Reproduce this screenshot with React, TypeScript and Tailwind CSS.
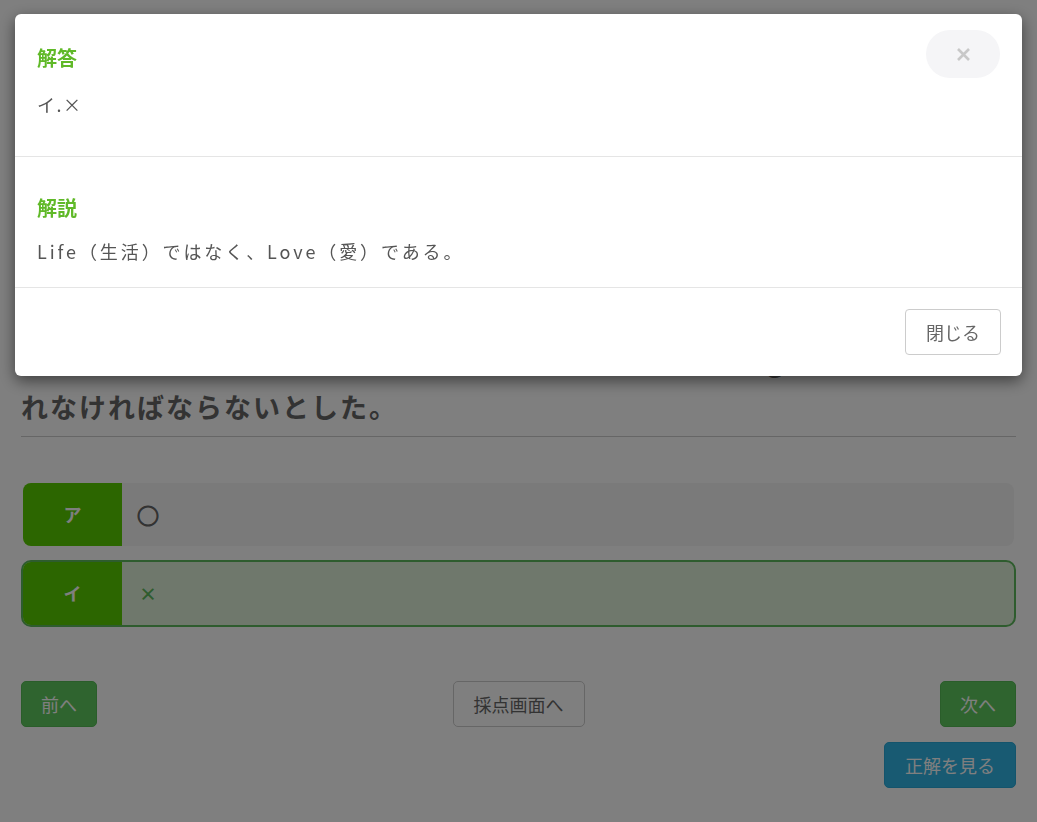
import React from 'react';

const font = '"Noto Sans CJK JP", "Noto Sans", sans-serif';

interface Choice {
  label: string;
  text: string;
  selected?: boolean;
}

const choices: Choice[] = [
  { label: 'ア', text: '○' },
  { label: 'イ', text: '×', selected: true },
];

const ChoiceRow: React.FC<{ choice: Choice }> = ({ choice }) => (
  <div
    className={
      choice.selected
        ? 'flex h-[67px] rounded-[10px] border-2 border-[#5cb85c] bg-[#dff0d8] overflow-hidden'
        : 'flex h-[67px] rounded-[10px] border-2 border-transparent bg-clip-padding bg-[#f5f5f5] overflow-hidden'
    }
  >
    <div className="w-[99px] shrink-0 flex items-center justify-center bg-[#58cc00] text-white text-[18px] font-bold">
      {choice.label}
    </div>
    <div
      className={
        choice.selected
          ? 'flex items-center pl-[17px] text-[18px] font-bold text-[#5cb85c]'
          : 'flex items-center pl-[15px] text-[22px] text-[#666] [-webkit-text-stroke:1.2px_#666]'
      }
    >
      {choice.text}
    </div>
  </div>
);

const Page: React.FC = () => (
  <div className="px-[21px] pt-[338px] pb-[40px]">
    <h2 className="text-[27px] leading-[46px] font-bold tracking-[2px] text-[#666] pb-[6px] border-b border-[#ccc]">
      ベンサムは、最大多数の最大幸福の原理によって、Loving Lifeが判断さ
      <br />
      れなければならないとした。
    </h2>

    <div className="mt-[44px] flex flex-col gap-[12px]">
      {choices.map((c) => (
        <ChoiceRow key={c.label} choice={c} />
      ))}
    </div>

    <div className="mt-[54px] flex items-start justify-between">
      <button className="h-[46px] px-[19px] rounded-[5px] bg-[#5fc95f] border border-[#55bb55] text-white text-[18px]">
        前へ
      </button>
      <button className="h-[46px] px-[20px] rounded-[5px] bg-white border border-[#ccc] text-[#666] text-[18px]">
        採点画面へ
      </button>
      <button className="h-[46px] px-[19px] rounded-[5px] bg-[#5fc95f] border border-[#55bb55] text-white text-[18px]">
        次へ
      </button>
    </div>
    <div className="mt-[15px] flex justify-end">
      <button className="h-[46px] px-[20px] rounded-[5px] bg-[#30b4e4] border border-[#28a8d8] text-white text-[18px]">
        正解を見る
      </button>
    </div>
  </div>
);

const AnswerModal: React.FC = () => (
  <div className="fixed inset-0 bg-black/50">
    <div className="relative mx-[15px] mt-[14px] bg-white rounded-[6px] shadow-[0_5px_15px_rgba(0,0,0,0.5)]">
      <button className="absolute top-[16px] right-[22px] w-[74px] h-[48px] rounded-full bg-[#f5f5f7] flex items-center justify-center text-[#c8c8c8]">
        <svg width="15" height="15" viewBox="0 0 15 15">
          <path d="M2 2 L13 13 M13 2 L2 13" stroke="currentColor" strokeWidth="2.6" strokeLinecap="butt" />
        </svg>
      </button>

      <div className="px-[22px] pt-[30px] pb-[39px] border-b border-[#e5e5e5]">
        <div className="text-[20px] leading-[28px] font-bold text-[#60b928]">解答</div>
        <div className="mt-[19px] text-[18px] leading-[26px] tracking-[1.5px] text-[#555]">イ.×</div>
      </div>

      <div className="px-[22px] pt-[37px] pb-[23px] border-b border-[#e5e5e5]">
        <div className="text-[20px] leading-[28px] font-bold text-[#60b928]">解説</div>
        <div className="mt-[16px] text-[18px] leading-[26px] tracking-[2.9px] text-[#555]">
          Life（生活）ではなく、Love（愛）である。
        </div>
      </div>

      <div className="flex justify-end px-[21px] py-[21px]">
        <button className="h-[46px] px-[20px] rounded-[4px] bg-white border border-[#ccc] text-[#666] text-[18px]">
          閉じる
        </button>
      </div>
    </div>
  </div>
);

export default function App() {
  return (
    <div className="relative min-h-[822px] bg-white overflow-hidden" style={{ fontFamily: font }}>
      <Page />
      <AnswerModal />
    </div>
  );
}
